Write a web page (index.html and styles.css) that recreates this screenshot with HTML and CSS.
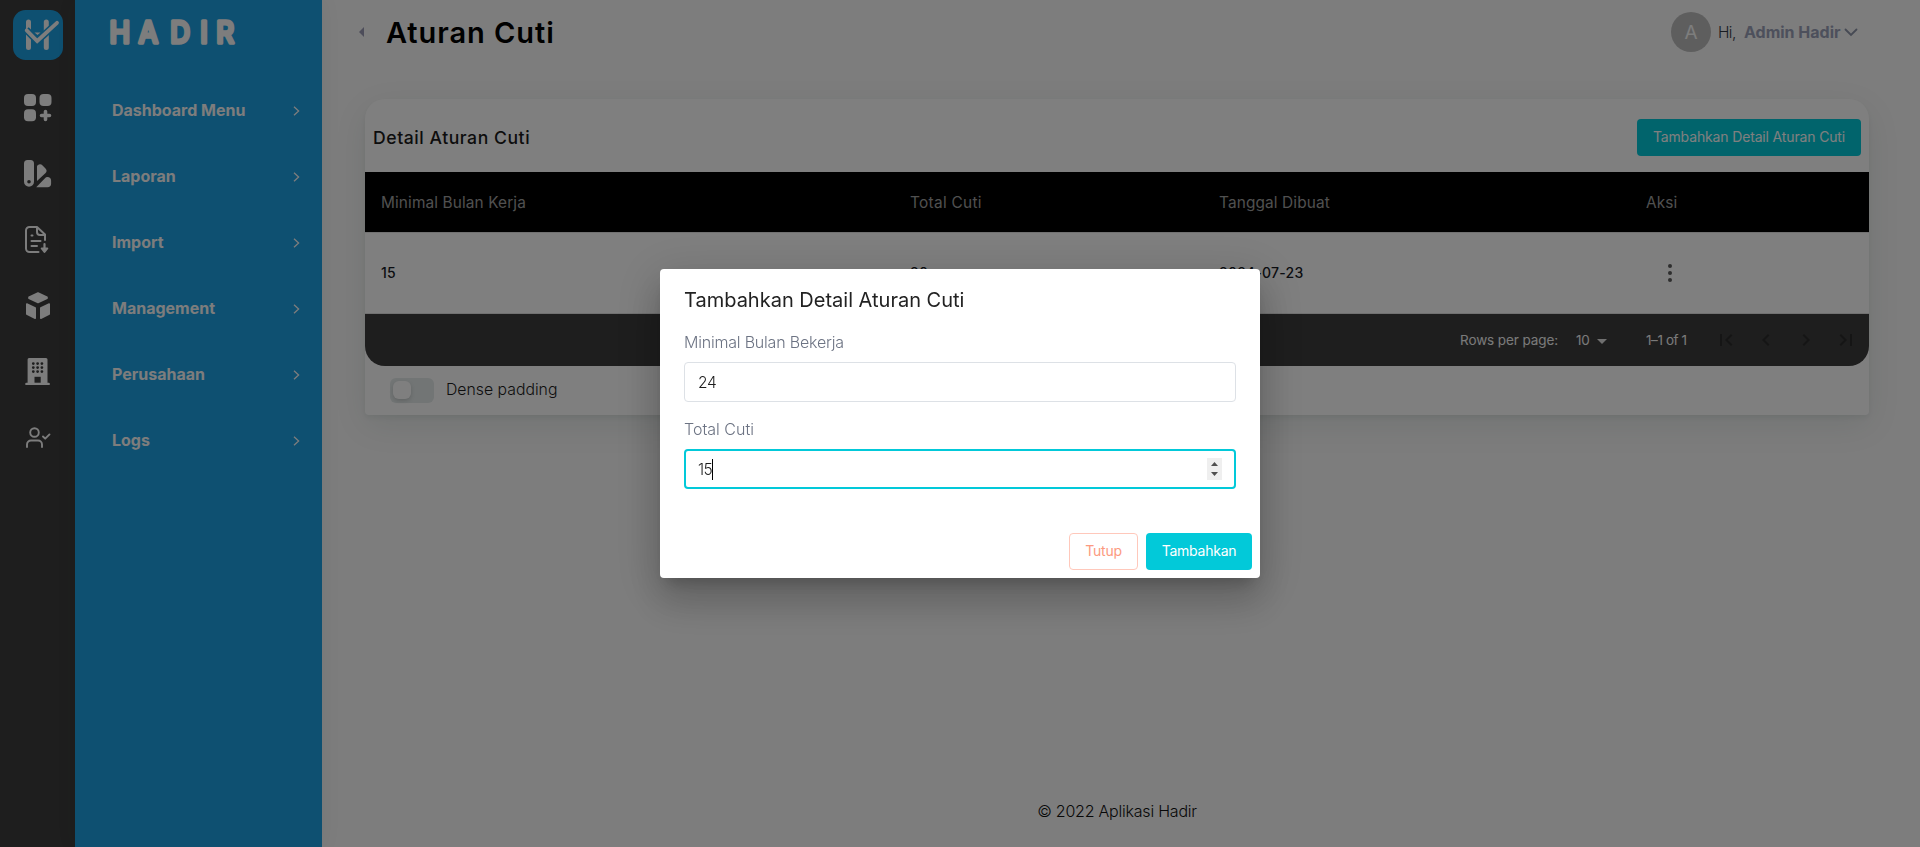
FILE: index.html
```html
<!DOCTYPE html>
<html lang="id">
<head>
<meta charset="utf-8">
<title>Aturan Cuti - Hadir</title>
<link rel="stylesheet" href="styles.css">
</head>
<body>
<div class="app">
  <nav class="rail">
    <svg class="logo" viewBox="0 0 50 50">
      <rect width="50" height="50" rx="12.500" fill="#1ca0e2"/>
      <path d="M15.500 12v25.500M33.300 12v25.500" fill="none" stroke="#fafafa" stroke-width="5" stroke-linecap="round"/>
      <path d="M13.200 19.800L24.200 31L44.200 12.800" fill="none" stroke="#1ca0e2" stroke-width="7" stroke-linejoin="round"/>
      <path d="M13.700 20.300L24.200 31L44 12.800" fill="none" stroke="#fafafa" stroke-width="3.800" stroke-linecap="round"/>
      <path d="M21.500 22.500h6l-3 2.500z" fill="#fafafa"/>
    </svg>
    <div class="rail-icons">
      <svg viewBox="0 0 28 28" fill="#fafafa"><rect width="12" height="12" rx="4"/><rect x="15.500" width="12" height="12" rx="4"/><rect y="15.300" width="12" height="12" rx="4"/><path d="M21.500 17.500v8M17.500 21.500h8" stroke="#fafafa" stroke-width="3.600" stroke-linecap="round"/></svg>
      <svg viewBox="0 0 28 28" fill="#fafafa"><path fill-rule="evenodd" d="M3.500 0h3A3.500 3.500 0 0 1 10 3.500v18.300a5 5 0 0 1-10 0V3.500A3.500 3.500 0 0 1 3.500 0zM5 20a1.800 1.800 0 1 0 0 3.600A1.800 1.800 0 0 0 5 20z"/><path d="M13 21V6.500c0-.6.300-1 .7-1.300 1.600-1.500 3.600-1.200 4.900.2l2.900 3c1.500 1.600 1.400 3.200.1 4.500z"/><path d="M12.200 27.300l9-9.200c.6-.7 1.100-1 2-1 2.400-.1 3.900 1.300 3.900 3.500v3.200c0 2.300-1.300 3.500-3.500 3.500z"/></svg>
      <svg viewBox="0 0 28 28" fill="none" stroke="#fafafa" stroke-width="2" stroke-linecap="round" stroke-linejoin="round"><path d="M14.500 26H5.500A3.500 3.500 0 0 1 2 22.500V4.500A3.500 3.500 0 0 1 5.500 1H13l8 7.500V14M13 1.500V6a3 3 0 0 0 3 3h4.500M7.500 9.500h1M7.500 15h9M7.500 20h5.500"/><path d="M20.500 18v7" stroke-width="2.200"/><path d="M17.700 22.500h5.600L20.500 26z" fill="#fafafa"/></svg>
      <svg viewBox="0 0 28 28" fill="#fafafa" stroke="#fafafa" stroke-width="1.600" stroke-linejoin="round"><path d="M14 1l9 4.300v.9L14 10.500 5 6.200v-.9zM2.800 12l8.400 4v10.200L2.800 22zM25.200 12l-8.400 4v10.200l8.400-4.200z"/></svg>
      <svg viewBox="0 0 28 28" fill="#fafafa"><path d="M5 0h17a1.500 1.500 0 0 1 1.500 1.500V24.700h1.200a1.200 1.200 0 0 1 0 2.400H2.400a1.200 1.200 0 0 1 0-2.400h1.200V1.500A1.500 1.500 0 0 1 5 0z"/><path d="M10.500 18.800h6.200v5.900h-6.200z" fill="#3c3c3c"/><path d="M9.300 5.600h.01M13.600 5.600h.01M17.900 5.600h.01M9.300 9.600h.01M13.600 9.600h.01M17.900 9.600h.01M9.300 13.600h.01M13.600 13.600h.01M17.900 13.600h.01" stroke="#3c3c3c" stroke-width="2.800" stroke-linecap="round"/></svg>
      <svg viewBox="0 0 28 28" fill="none" stroke="#fafafa" stroke-width="1.900" stroke-linecap="round" stroke-linejoin="round"><circle cx="10.500" cy="8.500" r="4.300"/><path d="M3 23v-2.500a4 4 0 0 1 4-4h7a4 4 0 0 1 4 4V23M19 12.500l2.200 2.200 4.300-4.300"/></svg>
    </div>
  </nav>

  <aside class="panel">
    <svg class="wordmark" viewBox="0 0 150 44"><g transform="scale(.92 1)"><text x="-.5 31.100 65.400 98 115.400" y="35.300">HADIR</text></g></svg>
    <ul class="menu">
      <li>Dashboard Menu<svg viewBox="0 0 7 10"><path d="M1 .700L5.600 5 1 9.300"/></svg></li>
      <li>Laporan<svg viewBox="0 0 7 10"><path d="M1 .700L5.600 5 1 9.300"/></svg></li>
      <li>Import<svg viewBox="0 0 7 10"><path d="M1 .700L5.600 5 1 9.300"/></svg></li>
      <li>Management<svg viewBox="0 0 7 10"><path d="M1 .700L5.600 5 1 9.300"/></svg></li>
      <li>Perusahaan<svg viewBox="0 0 7 10"><path d="M1 .700L5.600 5 1 9.300"/></svg></li>
      <li>Logs<svg viewBox="0 0 7 10"><path d="M1 .700L5.600 5 1 9.300"/></svg></li>
    </ul>
  </aside>

  <main class="main">
    <header class="topbar">
      <svg class="back" viewBox="0 0 5 10"><path d="M5 0v10L0 5z"/></svg>
      <h1>Aturan Cuti</h1>
      <div class="user">
        <span class="avatar">A</span>
        <span class="hi">Hi,</span>
        <span class="name">Admin Hadir</span>
        <svg viewBox="0 0 14 9"><path d="M1.500 1.500L7 7l5.500-5.500"/></svg>
      </div>
    </header>

    <section class="card">
      <div class="card-head">
        <h2>Detail Aturan Cuti</h2>
        <button class="btn primary wide">Tambahkan Detail Aturan Cuti</button>
      </div>
      <div class="row thead">
        <span>Minimal Bulan Kerja</span><span class="total">Total Cuti</span><span>Tanggal Dibuat</span><span>Aksi</span>
      </div>
      <div class="row tbody">
        <span>15</span><span>20</span><span>2024-07-23</span>
        <span class="action"><svg viewBox="0 0 4 18"><circle cx="2" cy="2" r="2"/><circle cx="2" cy="9" r="2"/><circle cx="2" cy="16" r="2"/></svg></span>
      </div>
      <div class="pager">
        <span class="rows">Rows per page:</span>
        <span class="size">10</span>
        <svg class="caret" viewBox="0 0 10 5"><path d="M0 0h10L5 5z"/></svg>
        <span class="range">1–1 of 1</span>
        <div class="nav">
          <svg viewBox="0 0 24 24"><path d="M18.410 16.590L13.820 12l4.590-4.590L17 6l-6 6 6 6zM6 6h2v12H6z"/></svg>
          <svg viewBox="0 0 24 24"><path d="M15.410 16.590L10.830 12l4.580-4.590L14 6l-6 6 6 6z"/></svg>
          <svg viewBox="0 0 24 24"><path d="M8.590 16.590L13.170 12 8.590 7.410 10 6l6 6-6 6z"/></svg>
          <svg viewBox="0 0 24 24"><path d="M5.590 7.410L10.180 12l-4.590 4.590L7 18l6-6-6-6zM16 6h2v12h-2z"/></svg>
        </div>
      </div>
      <div class="dense"><span class="switch"><i></i></span><span class="dense-label">Dense padding</span></div>
    </section>

    <footer>© 2022 Aplikasi Hadir</footer>
  </main>
</div>

<div class="backdrop">
  <div class="modal" role="dialog">
    <h3>Tambahkan Detail Aturan Cuti</h3>
    <label class="bulan">Minimal Bulan Bekerja</label>
    <div class="field">24</div>
    <label>Total Cuti</label>
    <div class="field focused">
      <span class="value">15</span><i class="cursor"></i>
      <svg class="spin" viewBox="0 0 15 22"><path d="M0 0h15v22H0z" fill="#efefef"/><path d="M4 8h7L7.500 4zM4 14h7l-3.500 4z" fill="#505050"/></svg>
    </div>
    <div class="actions">
      <button class="btn outline">Tutup</button>
      <button class="btn primary submit">Tambahkan</button>
    </div>
  </div>
</div>
</body>
</html>
```

FILE: styles.css
```css
* { box-sizing: border-box; }
body { margin: 0; font-family: Inter, "Liberation Sans", sans-serif; font-size: 16px; overflow: hidden; }
h1, h2, h3, ul { margin: 0; padding: 0; list-style: none; }
svg { display: block; flex: none; }

.app { display: flex; height: 847px; background: #fafafa; }

.rail { width: 75px; background: #3c3c3c; padding: 10px 0 0 13px; flex: none; }
.logo { width: 50px; height: 50px; }
.rail-icons { display: flex; flex-direction: column; gap: 38px; padding: 34px 0 0 11px; }
.rail-icons svg { width: 28px; height: 28px; }

.panel { width: 247px; background: #1ca0e2; color: #fafafa; flex: none; padding: 8px 22px 0 35px; box-shadow: 0 0 20px rgba(20, 70, 55, .06); z-index: 1; }
.wordmark { width: 150px; height: 44px; overflow: visible; }
.wordmark text { font: 500 30px Inter, sans-serif; fill: #fafafa; stroke: #fafafa; stroke-width: 3.400px; stroke-linejoin: round; }
.menu { padding: 26px 0 0 2px; }
.menu li { height: 66px; display: flex; align-items: center; justify-content: space-between; font-weight: 700; padding-bottom: 2px; }
.menu svg { width: 7px; height: 10px; margin-top: 2px; fill: none; stroke: #fafafa; stroke-width: 1.300; }

.main { flex: 1; display: flex; flex-direction: column; padding: 0 51px 0 43px; }
.topbar { display: flex; align-items: center; height: 64px; margin-left: -6px; }
.back { width: 5px; height: 10px; fill: #9a9ab4; }
.topbar h1 { margin-left: 22px; font-size: 29px; font-weight: 600; letter-spacing: .95px; color: #000; line-height: 62px; padding-top: 2px; }
.user { margin-left: auto; margin-right: 11px; display: flex; align-items: center; }
.avatar { width: 40px; height: 40px; border-radius: 50%; background: #bdbdbd; color: #fafafa; font-size: 19px; line-height: 41px; text-align: center; }
.hi { margin-left: 7px; width: 26px; font-weight: 300; color: #313845; font-size: 15.500px; letter-spacing: -.6px; }
.name { width: 98px; font-weight: 700; color: #9aa1b8; }
.user svg { width: 14px; height: 9px; margin-left: 2px; fill: none; stroke: #8d94a8; stroke-width: 1.800; stroke-linecap: round; }

.card { margin-top: 35px; height: 316px; background: #fff; border-radius: 20px 20px 4px 4px; box-shadow: 0 3px 5px rgba(10, 50, 40, .06), 0 10px 34px rgba(10, 50, 40, .09); }
.card-head { height: 73px; padding: 4px 8px 0; display: flex; align-items: center; justify-content: space-between; }
.card-head h2 { font-size: 17.600px; font-weight: 500; letter-spacing: .55px; color: #1a1a1a; line-height: 22px; }

.btn { height: 37px; border: 0; border-radius: 4px; font: 400 14px/36px Inter, sans-serif; padding: 0 0 1px; letter-spacing: -.25px; }
.primary { background: #02c9d9; color: #fff; }
.wide { width: 224px; letter-spacing: -.15px; }
.submit { width: 106px; }
.outline { width: 69px; background: #fff; border: 1px solid #ffc8bb; color: #fc9a80; line-height: 34px; }

.row { display: grid; grid-template-columns: 529px 309px 427px 1fr; align-items: center; }
.row span { padding-left: 16px; }
.thead { height: 60px; background: #000; color: #a0a0a0; font-size: 15.400px; letter-spacing: .12px; }
.thead .total { letter-spacing: .3px; }
.tbody { height: 82px; border-top: 1px solid #e2e2e2; border-bottom: 1px solid #e2e2e2; color: #171a24; font-size: 14px; font-weight: 500; letter-spacing: .25px; }
.tbody span { padding-bottom: 2px; }
.row .action { padding: 0 0 0 38px; }
.action svg { width: 4px; height: 18px; fill: #5c5c5c; }

.pager { height: 52px; background: #3c3c3c; color: #f4f4f4; border-radius: 0 0 20px 20px; display: flex; align-items: center; justify-content: flex-end; padding: 0 11px 1px 0; font-size: 13.500px; }
.rows { width: 116px; letter-spacing: -.1px; }
.size { width: 21px; letter-spacing: -.2px; }
.caret { width: 10px; height: 5px; fill: #e0e0e0; margin-top: 3px; }
.range { margin-left: 39px; width: 68px; letter-spacing: -.4px; }
.nav { display: flex; gap: 16px; padding-top: 1px; }
.nav svg { width: 24px; height: 24px; fill: #2b2b2b; }

.dense { display: flex; align-items: center; height: 49px; padding-left: 25px; font-weight: 300; color: #1c1c1c; font-size: 15.800px; }
.dense-label { padding-bottom: 2px; }
.switch { width: 44px; height: 25px; border-radius: 6px; background: #e4eaea; padding: 3px; margin-right: 12px; }
.switch i { display: block; width: 18px; height: 18px; border-radius: 6px; background: #fff; box-shadow: 0 2px 4px rgba(0, 0, 0, .15); }

footer { margin-top: auto; text-align: center; font-weight: 300; color: #111; letter-spacing: -.22px; line-height: 24px; padding-bottom: 24px; }

.backdrop { position: fixed; inset: 0; z-index: 5; background: rgba(0, 0, 0, .5); display: flex; align-items: center; justify-content: center; }
.modal { width: 600px; height: 309px; background: #fff; border-radius: 4px; padding: 15px 24px 8px; display: flex; flex-direction: column; box-shadow: 0 11px 15px -7px rgba(0, 0, 0, .2), 0 24px 38px 3px rgba(0, 0, 0, .14), 0 9px 46px 8px rgba(0, 0, 0, .12); }
.modal h3 { font-size: 20px; font-weight: 400; color: #222; line-height: 32px; }
.modal label { font-weight: 300; color: #6c7383; line-height: 24px; margin-top: 14px; }
.modal .bulan { letter-spacing: -.2px; }
.field { display: flex; align-items: center; height: 40px; margin-top: 8px; padding: 0 13px; border: 1px solid #dde1e6; border-radius: 4px; font-weight: 300; font-size: 15.500px; color: #1c1c1c; letter-spacing: -.2px; }
.field + label { margin-top: 15px; }
.focused { border: 2px solid #02c9d9; padding: 0 12px; }
.value { letter-spacing: -.6px; }
.cursor { width: 1px; height: 21px; background: #000; }
.spin { width: 15px; height: 22px; margin-left: auto; }
.actions { margin: auto -16px 0 0; display: flex; justify-content: flex-end; gap: 8px; }
```
